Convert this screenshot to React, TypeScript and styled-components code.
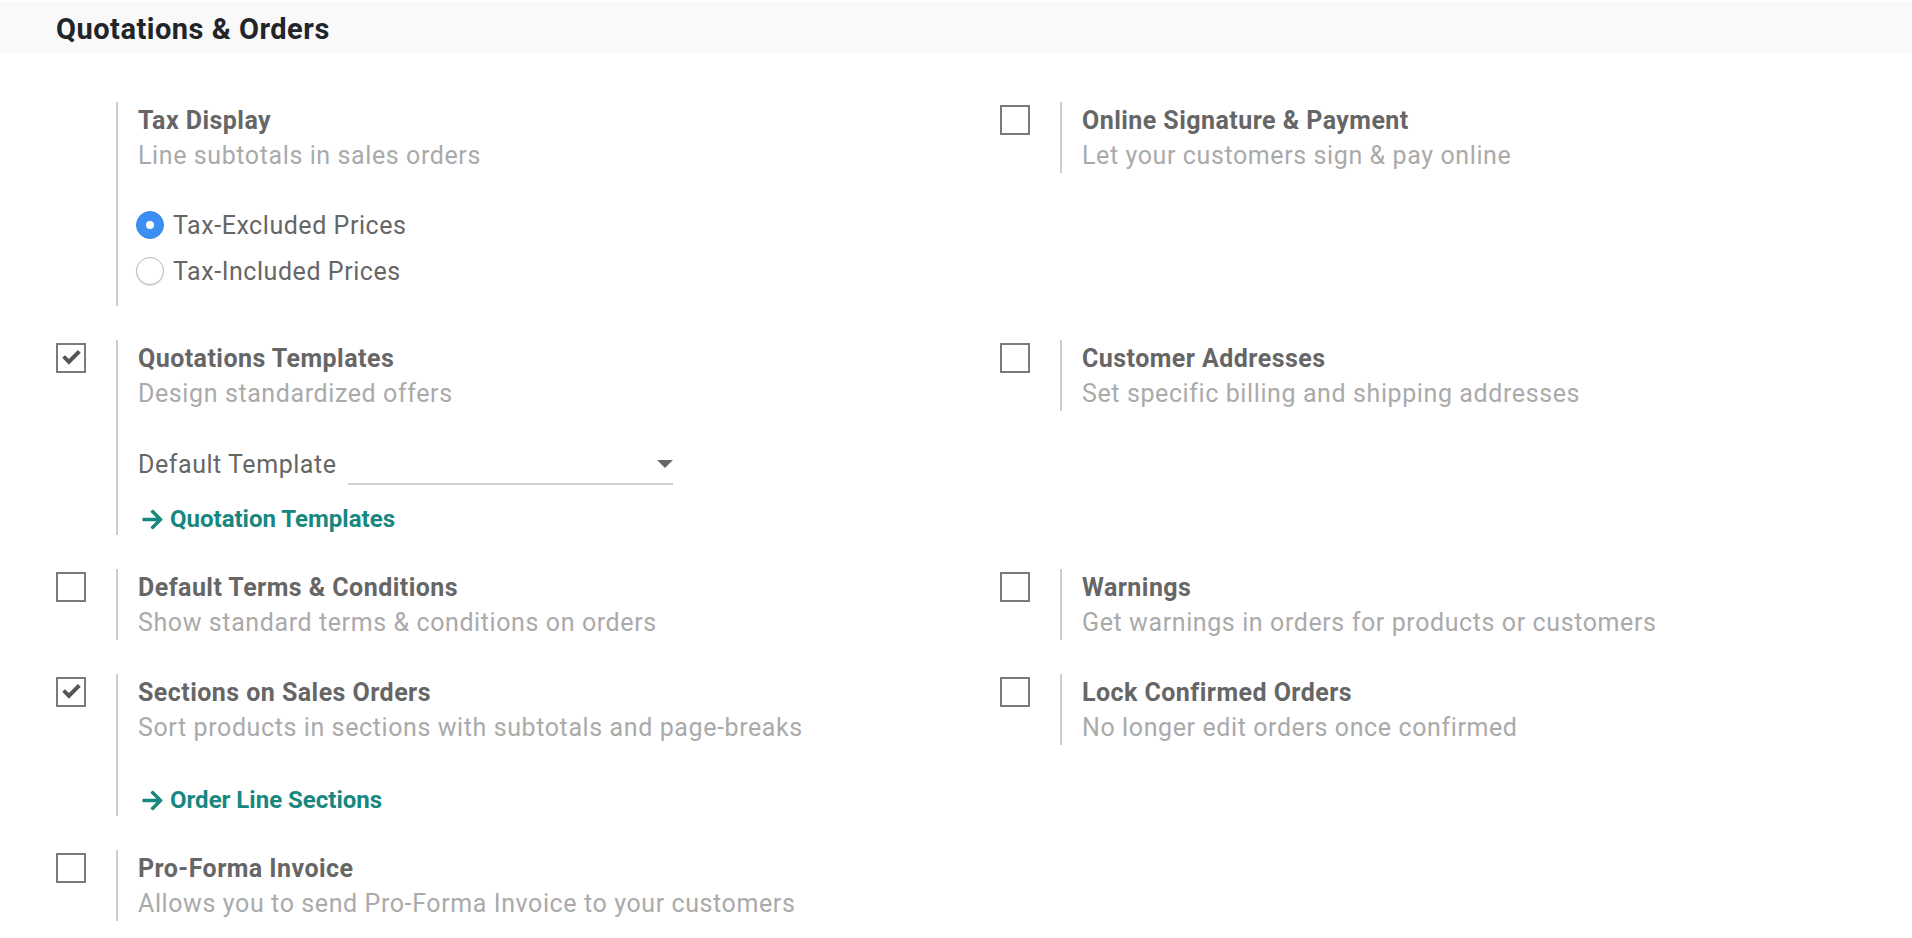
import React from "react";
import styled, { createGlobalStyle } from "styled-components";
import { FaArrowRight } from "react-icons/fa";

const GlobalStyle = createGlobalStyle`
  html, body {
    margin: 0;
    padding: 0;
    background: #ffffff;
  }
  body {
    font-family: Roboto, "Noto Sans", "Liberation Sans", sans-serif;
    -webkit-font-smoothing: antialiased;
  }
  * { box-sizing: border-box; }
`;

const Page = styled.div`
  padding-top: 2px;
  min-height: 938px;
`;

const SectionHeader = styled.div`
  height: 51px;
  background: #f9f9f9;
  display: flex;
  align-items: center;
  padding: 4px 0 0 56px;
`;

const SectionTitle = styled.h2`
  margin: 0;
  font-size: 29px;
  font-weight: 700;
  letter-spacing: 0.5px;
  color: #212529;
  line-height: 1;
`;

const SettingsGrid = styled.div`
  display: grid;
  grid-template-columns: 944px 944px;
  row-gap: 34px;
  padding: 49px 0 0 56px;
`;

const SettingBox = styled.div`
  display: flex;
  align-items: flex-start;
`;

const LeftPane = styled.div`
  width: 60px;
  flex: none;
  padding-top: 3px;
`;

const CheckBox = styled.div`
  width: 30px;
  height: 30px;
  border: 2px solid #7a7a7a;
  background: #fff;
  display: flex;
  align-items: center;
  justify-content: center;
  padding-bottom: 1px;
`;

const RightPane = styled.div`
  border-left: 2px solid #cdcdcd;
  padding-left: 20px;
  flex: 1;
`;

const Title = styled.div`
  font-size: 25px;
  font-weight: 700;
  letter-spacing: 0.45px;
  color: #666;
  line-height: 36px;
  padding-top: 1px;
  margin-bottom: -1px;
  white-space: nowrap;
`;

const Description = styled.div`
  font-size: 25px;
  font-weight: 400;
  letter-spacing: 0.6px;
  color: #aaa;
  line-height: 35px;
  white-space: nowrap;
`;

const RadioList = styled.div`
  margin: 29px 0 0 -2px;
  padding-bottom: 12px;
`;

const RadioRow = styled.label`
  height: 46px;
  display: flex;
  align-items: center;
  gap: 9px;
  font-size: 25px;
  letter-spacing: 0.55px;
  color: #666;
`;

const RadioDot = styled.span<{ $on?: boolean }>`
  width: 28px;
  height: 28px;
  border-radius: 50%;
  flex: none;
  display: flex;
  align-items: center;
  justify-content: center;
  background: ${(p) => (p.$on ? "#3b8ff3" : "#fff")};
  border: 1px solid ${(p) => (p.$on ? "#3785e8" : "#b9b9b9")};
  box-shadow: ${(p) => (p.$on ? "none" : "0 1px 1px rgba(0,0,0,0.12)")};
  &::after {
    content: "";
    display: ${(p) => (p.$on ? "block" : "none")};
    width: 8px;
    height: 8px;
    border-radius: 50%;
    background: #fff;
  }
`;

const FieldRow = styled.div`
  margin-top: 34px;
  display: flex;
  align-items: flex-start;
  height: 40px;
`;

const FieldLabel = styled.span`
  font-size: 25px;
  letter-spacing: 0.55px;
  color: #666;
  line-height: 36px;
  padding-top: 2px;
`;

const SelectBox = styled.div`
  margin-left: 11px;
  width: 325px;
  height: 40px;
  border-bottom: 2px solid #cfcfcf;
  display: flex;
  align-items: center;
  justify-content: flex-end;
`;

const Caret = styled.span`
  width: 0;
  height: 0;
  border-left: 8px solid transparent;
  border-right: 8px solid transparent;
  border-top: 8px solid #666;
`;

const LinkRow = styled.a<{ $gap: number }>`
  margin-top: ${(p) => p.$gap}px;
  display: flex;
  align-items: center;
  gap: 6px;
  height: 32px;
  padding-left: 3px;
  font-size: 24px;
  font-weight: 700;
  color: #17877f;
  text-decoration: none;
  white-space: nowrap;
`;

const CheckMark = () => (
  <svg width="19" height="15" viewBox="0 0 16 12.6" aria-hidden="true">
    <path d="M0.2 6.6 L2.5 4.3 L5.8 7.6 L13.4 0 L15.8 2.4 L5.8 12.4 Z" fill="#555" />
  </svg>
);

type Setting = {
  title: string;
  desc: string;
  checkbox?: boolean;
  checked?: boolean;
  extra?: "tax" | "template" | "sections";
};

const settings: Setting[] = [
  { title: "Tax Display", desc: "Line subtotals in sales orders", extra: "tax" },
  { title: "Online Signature & Payment", desc: "Let your customers sign & pay online", checkbox: true },
  { title: "Quotations Templates", desc: "Design standardized offers", checkbox: true, checked: true, extra: "template" },
  { title: "Customer Addresses", desc: "Set specific billing and shipping addresses", checkbox: true },
  { title: "Default Terms & Conditions", desc: "Show standard terms & conditions on orders", checkbox: true },
  { title: "Warnings", desc: "Get warnings in orders for products or customers", checkbox: true },
  { title: "Sections on Sales Orders", desc: "Sort products in sections with subtotals and page-breaks", checkbox: true, checked: true, extra: "sections" },
  { title: "Lock Confirmed Orders", desc: "No longer edit orders once confirmed", checkbox: true },
  { title: "Pro-Forma Invoice", desc: "Allows you to send Pro-Forma Invoice to your customers", checkbox: true },
];

function Extra({ kind }: { kind?: Setting["extra"] }) {
  if (kind === "tax") {
    return (
      <RadioList>
        <RadioRow>
          <RadioDot $on />
          Tax-Excluded Prices
        </RadioRow>
        <RadioRow>
          <RadioDot />
          Tax-Included Prices
        </RadioRow>
      </RadioList>
    );
  }
  if (kind === "template") {
    return (
      <>
        <FieldRow>
          <FieldLabel>Default Template</FieldLabel>
          <SelectBox>
            <Caret />
          </SelectBox>
        </FieldRow>
        <LinkRow $gap={18} href="#">
          <FaArrowRight size={23} />
          Quotation Templates
        </LinkRow>
      </>
    );
  }
  if (kind === "sections") {
    return (
      <LinkRow $gap={39} href="#">
        <FaArrowRight size={23} />
        Order Line Sections
      </LinkRow>
    );
  }
  return null;
}

export default function App() {
  return (
    <Page>
      <GlobalStyle />
      <SectionHeader>
        <SectionTitle>Quotations &amp; Orders</SectionTitle>
      </SectionHeader>
      <SettingsGrid>
        {settings.map((s) => (
          <SettingBox key={s.title}>
            <LeftPane>
              {s.checkbox && <CheckBox>{s.checked && <CheckMark />}</CheckBox>}
            </LeftPane>
            <RightPane>
              <Title>{s.title}</Title>
              <Description>{s.desc}</Description>
              <Extra kind={s.extra} />
            </RightPane>
          </SettingBox>
        ))}
      </SettingsGrid>
    </Page>
  );
}
